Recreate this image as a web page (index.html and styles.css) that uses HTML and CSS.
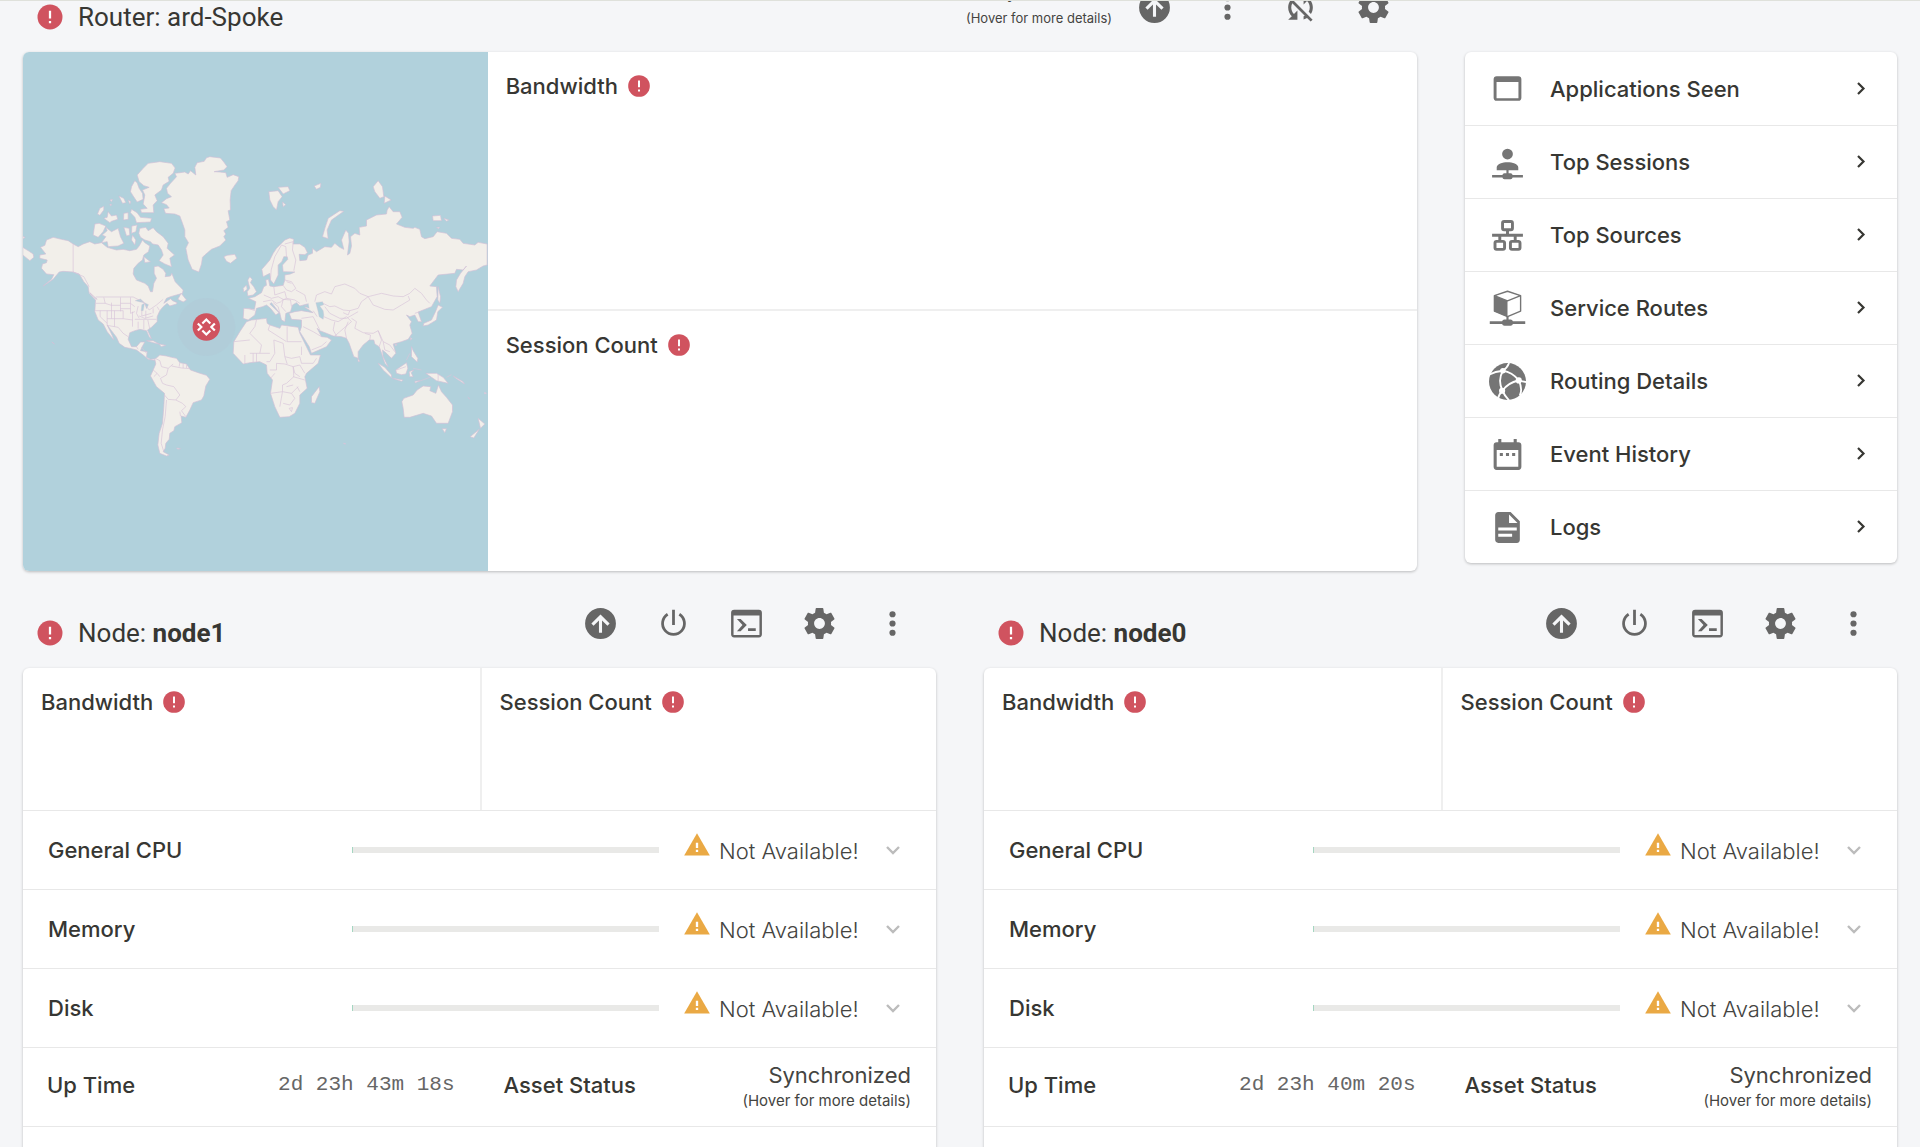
FILE: index.html
```html
<!DOCTYPE html>
<html lang="en">
<head>
<meta charset="utf-8">
<title>Router: ard-Spoke</title>
<link rel="stylesheet" href="styles.css">
</head>
<body>
<svg class="sprite" aria-hidden="true">
  <symbol id="i-error" viewBox="0 0 24 24"><circle cx="12" cy="12" r="10" fill="#d0535f"/><path fill="#fff" d="M11.1 7h1.8v6.2h-1.8zM11.1 15.2h1.8V17h-1.8z"/></symbol>
  <symbol id="i-warning" viewBox="0 0 24 24"><path fill="#eaa944" d="M1 21h22L12 2z"/><path fill="#fff" d="M11 10h2v4.5h-2zM11 16h2v2h-2z"/></symbol>
  <symbol id="i-up" viewBox="0 0 24 24"><path fill-rule="evenodd" d="M13,18V10L16.5,13.5L17.92,12.08L12,6.16L6.08,12.08L7.5,13.5L11,10V18H13M12,2A10,10 0 0,1 22,12A10,10 0 0,1 12,22A10,10 0 0,1 2,12A10,10 0 0,1 12,2Z"/></symbol>
  <symbol id="i-power" viewBox="0 0 24 24"><path fill="none" stroke="currentColor" stroke-width="1.8" d="M8.2 6A7.1 7.1 0 1 0 15.800 6M12 3v10"/></symbol>
  <symbol id="i-console" viewBox="0 0 24 24"><path fill-rule="evenodd" d="M4 3h16a2 2 0 0 1 2 2v14a2 2 0 0 1-2 2H4a2 2 0 0 1-2-2V5a2 2 0 0 1 2-2zM3.6 6.8v12.6h16.8V6.8zM5.8 9h2.4l4 4-4 4H5.8l3.6-4zM13 15h5v1.8h-5z"/></symbol>
  <symbol id="i-gear" viewBox="0 0 24 24"><path d="M19.43 12.98c.04-.32.07-.64.07-.98s-.03-.66-.07-.98l2.11-1.65c.19-.15.24-.42.12-.64l-2-3.46c-.12-.22-.39-.3-.61-.22l-2.49 1c-.52-.4-1.08-.73-1.69-.98l-.38-2.65C14.46 2.18 14.25 2 14 2h-4c-.25 0-.46.18-.49.42l-.38 2.65c-.61.25-1.17.59-1.69.98l-2.49-1c-.23-.09-.49 0-.61.22l-2 3.46c-.13.22-.07.49.12.64l2.11 1.65c-.04.32-.07.65-.07.98s.03.66.07.98l-2.11 1.65c-.19.15-.24.42-.12.64l2 3.46c.12.22.39.3.61.22l2.49-1c.52.4 1.08.73 1.69.98l.38 2.65c.03.24.24.42.49.42h4c.25 0 .46-.18.49-.42l.38-2.65c.61-.25 1.17-.59 1.69-.98l2.49 1c.23.09.49 0 .61-.22l2-3.46c.12-.22.07-.49-.12-.64l-2.11-1.65zM12 15.5c-1.93 0-3.5-1.57-3.5-3.5s1.57-3.5 3.5-3.5 3.5 1.57 3.5 3.5-1.57 3.5-3.5 3.5z"/></symbol>
  <symbol id="i-more" viewBox="0 0 24 24"><circle cx="12" cy="6" r="2"/><circle cx="12" cy="12" r="2"/><circle cx="12" cy="18" r="2"/></symbol>
  <symbol id="i-nosync" viewBox="0 0 24 24"><path d="M10 6.35V4.26c-.8.21-1.55.54-2.23.96l1.46 1.46c.25-.12.5-.24.77-.33zm-7.14-.94l2.36 2.36C4.45 8.99 4 10.44 4 12c0 2.21.91 4.2 2.36 5.64L4 20h6v-6l-2.24 2.24C6.68 15.15 6 13.66 6 12c0-1 .25-1.94.68-2.77l8.08 8.08c-.25.13-.5.25-.77.34v2.09c.8-.21 1.55-.54 2.23-.96l2.36 2.36 1.27-1.27L4.14 4.14 2.86 5.41zM20 4h-6v6l2.24-2.24C17.32 8.85 18 10.34 18 12c0 1-.25 1.94-.68 2.77l1.46 1.46C19.55 15.01 20 13.56 20 12c0-2.21-.91-4.2-2.36-5.64L20 4z"/></symbol>
  <symbol id="i-app" viewBox="0 0 24 24"><path fill-rule="evenodd" d="M5 4h14a2 2 0 0 1 2 2v12a2 2 0 0 1-2 2H5a2 2 0 0 1-2-2V6a2 2 0 0 1 2-2zM4.9 7.8v10.6h14.2V7.8z"/></symbol>
  <symbol id="i-user" viewBox="0 0 24 24"><circle cx="12" cy="6.500" r="3.500"/><path d="M5 17v-1.800c0-2.200 3.800-3.400 7-3.400s7 1.200 7 3.400V17h-6.300v2h1.300a1.300 1.300 0 0 1 1.300 1.100H22v1.700h-6.700A1.300 1.300 0 0 1 14 22.900h-4a1.300 1.300 0 0 1-1.300-1.100H2v-1.700h6.700A1.300 1.300 0 0 1 10 19h1.300v-2z"/></symbol>
  <symbol id="i-tree" viewBox="0 0 24 24"><path fill="none" stroke="currentColor" stroke-width="1.9" d="M9.800 2.900h4.400a1 1 0 0 1 1 1v3.400a1 1 0 0 1-1 1H9.800a1 1 0 0 1-1-1V3.900a1 1 0 0 1 1-1zM12 8.500v3.300M2 11.800h20M7 12v3.500M17 12v3.500M4.900 15.800h4.200a1 1 0 0 1 1 1V20a1 1 0 0 1-1 1H4.900a1 1 0 0 1-1-1v-3.200a1 1 0 0 1 1-1zM14.900 15.800h4.200a1 1 0 0 1 1 1V20a1 1 0 0 1-1 1h-4.200a1 1 0 0 1-1-1v-3.200a1 1 0 0 1 1-1z"/></symbol>
  <symbol id="i-cube" viewBox="0 0 24 24"><path fill="none" stroke="currentColor" stroke-width=".9" stroke-linejoin="round" d="M12 .8l8.500 2.900v10L12 17.200l-8.500-3.500v-10zM3.500 3.700L12 7l8.500-3.300"/><path d="M3.300 3.700L12 7v10.400l-8.700-3.600zM11.300 17h1.400v2.200h1.300a1.600 1.600 0 0 1 1.500 1.100h8v1.700h-8a1.600 1.600 0 0 1-1.500 1.200h-4A1.600 1.600 0 0 1 8.500 22h-8v-1.700h8a1.600 1.600 0 0 1 1.500-1.100h1.300z"/></symbol>
  <symbol id="i-globe" viewBox="0 0 24 24"><circle cx="12" cy="12" r="12"/><g fill="none" stroke="#fff" stroke-width="1.200"><path d="M0 7.600Q4 5.500 9 5Q12 3 13 0M9 5Q5.500 11 8.700 18Q10 21 13 24.200M9 5Q15 6 19.300 11.200Q22 12 24.500 12.400M19.300 11.200Q12 13 8.700 18Q6.500 20 5.500 24M19.300 11.200Q22 17 20 21"/></g><g fill="#fff"><circle cx="9" cy="5" r="1.800"/><circle cx="19.300" cy="11.300" r="2"/><circle cx="8.500" cy="18" r="2"/></g></symbol>
  <symbol id="i-calendar" viewBox="0 0 24 24"><path fill-rule="evenodd" d="M6 2h2v2h8V2h2v2h1a2 2 0 0 1 2 2v14a2 2 0 0 1-2 2H5a2 2 0 0 1-2-2V6a2 2 0 0 1 2-2h1zM5 9v11h14V9zM7 11h2v2H7zM11 11h2v2h-2zM15 11h2v2h-2z"/></symbol>
  <symbol id="i-doc" viewBox="0 0 24 24"><path fill-rule="evenodd" d="M13,9H18.500L13,3.500V9M6,2H14L20,8V20A2,2 0 0,1 18,22H6C4.890,22 4,21.100 4,20V4C4,2.890 4.890,2 6,2M15,18V16H6V18H15M18,14V12H6V14H18Z"/></symbol>
  <symbol id="i-right" viewBox="0 0 16 16"><path fill="none" stroke="currentColor" stroke-width="2.200" d="M5 2L10.500 7.500L5 13"/></symbol>
  <symbol id="i-down" viewBox="0 0 16 16"><path fill="none" stroke="currentColor" stroke-width="2.400" d="M2 5L8 11L14 5"/></symbol>
</svg>
<main class="page">
  <div class="overview">
    <section class="router">
      <header class="bar">
        <h1 class="title"><svg class="badge"><use href="#i-error"/></svg>Router: ard-Spoke</h1>
        <div class="actions">
          <p class="sync">Synchronized<small>(Hover for more details)</small></p>
          <button class="action" aria-label="Upgrade"><svg><use href="#i-up"/></svg></button>
          <button class="action" aria-label="More"><svg><use href="#i-more"/></svg></button>
          <button class="action" aria-label="Synchronization disabled"><svg><use href="#i-nosync"/></svg></button>
          <button class="action" aria-label="Settings"><svg><use href="#i-gear"/></svg></button>
        </div>
      </header>
      <div class="card router-card">
        <svg class="map" viewBox="0 0 465 519" preserveAspectRatio="xMidYMid slice" role="img" aria-label="World map">
          <g transform="translate(-3 88) scale(.33333)">
            <g class="land">
              <path d="M425,188L440,176 455,170 443,160 440,145 452,130 470,110 465,100 480,98 495,96 505,102 512,92 528,105 525,82 532,68 553,64 560,53 570,50 602,54 612,66 622,80 612,90 583,95 600,96 618,98 622,112 640,104 657,110 655,122 646,134 634,152 631,180 632,210 625,212 630,240 620,245 625,262 612,272 618,282 612,290 618,300 600,318 575,328 555,345 548,352 545,372 537,396 517,388 505,360 498,325 506,308 495,290 495,270 488,250 480,228 465,222 437,220 432,206 448,204 440,194Z"/>
              <path d="M352,105L370,85 385,70 420,65 455,70 466,84 460,100 445,112 448,124 430,135 425,150 405,165 412,182 400,195 402,218 365,218 362,208 382,205 370,192 375,165 368,150 388,142 372,137 358,125Z"/>
              <path d="M335,140L345,122 352,128 358,145 368,160 370,178 352,186 340,168 332,155ZM225,252L238,250 258,258 250,275 235,292 220,285ZM258,262L275,275 295,265 302,290 312,310 295,318 265,320 262,305 245,308 258,290 247,285 262,272ZM360,265L378,262 385,272 400,263 410,275 430,290 445,310 442,325 464,345 450,355 455,380 435,372 418,362 430,345 425,330 415,315 398,312 392,305 375,300 362,292 357,280ZM335,208L352,218 362,232 395,235 392,246 350,248 345,232 332,218ZM252,235L262,232 265,215 275,228 290,225 294,238 275,244 270,248ZM233,222L240,205 252,199 252,210 240,226ZM297,168L312,175 318,188 308,190ZM325,180L333,185 330,193ZM312,220L325,218 325,238 311,240ZM336,258L352,255 348,275 335,280ZM312,262L328,265 330,285 320,288ZM338,285L348,300 345,315 335,300ZM372,350L392,365 375,368ZM270,180L278,178 275,185ZM270,192L276,194 272,198Z"/>
              <path d="M62,322L75,316 80,300 100,292 125,298 145,302 160,312 175,320 190,312 210,305 225,312 245,308 262,322 290,330 310,328 330,332 350,328 358,318 368,300 375,308 390,318 386,335 372,345 368,360 355,370 342,385 340,402 350,420 375,430 385,438 392,455 398,455 402,430 410,415 403,400 403,380 415,378 430,388 438,400 436,410 452,408 456,400 466,425 490,450 488,460 470,465 452,470 440,475 432,490 452,476 458,482 472,488 470,492 450,498 442,490 430,500 420,512 412,530 412,545 395,562 383,570 390,585 395,597 388,590 380,572 360,568 345,572 330,578 325,598 335,620 350,620 362,606 375,606 366,622 362,632 382,635 380,652 392,658 408,656 404,661 385,658 370,645 350,630 335,626 315,622 298,610 290,592 275,572 262,555 278,588 282,600 262,575 250,552 235,540 225,515 227,480 208,460 205,440 192,425 178,402 160,396 130,394 118,396 100,418 70,438 95,418 102,404 80,402 65,385 68,372 80,368 82,360 60,355 60,345 78,342Z"/>
              <path d="M474,478L484,460 500,480 490,486ZM380,602L400,602 418,612 400,608ZM418,612L438,616 424,620ZM9,322L28,334 40,342 42,352 30,362 9,345ZM96,606L104,612 98,608ZM210,458L232,478 222,472ZM470,924L482,926 474,928ZM9,289L16,292 10,296Z"/>
              <path d="M405,658L420,645 440,648 455,652 470,655 480,668 500,672 512,690 535,698 560,706 570,718 558,738 552,768 545,780 520,788 510,810 498,832 484,828 486,848 465,860 462,872 450,880 448,898 438,910 436,925 430,935 448,945 440,948 420,940 414,915 418,880 428,850 432,800 434,760 410,740 392,708 400,690 408,672Z"/>
              <path d="M612,350L622,346 645,343 651,355 632,370 620,364ZM682,455L690,445 686,430 684,420 690,410 697,418 692,428 702,440 710,455 700,465 684,468ZM670,445L680,435 682,448 672,456Z"/>
            </g>
            <path class="sea" d="M346,482L362,477 374,488 362,486ZM364,512L366,494 374,490 370,512ZM374,488L386,494 380,506Z"/>
            <path class="borders" d="M160,312V396L192,410 208,440M228,471H340L370,486 388,510 410,495 430,478M252,472L256,490H228M226,512H275M275,488V536M241,512V530L262,550M262,512V556M284,512V560M302,472V514M332,472V520M256,490L275,496H302M302,490H332L345,500M302,506H332M275,512H310V536M262,536H310L338,540M332,520L345,515M338,515V560M355,498L350,520 358,535M366,512V528L395,520M378,512V535M345,538H410M372,540V568M384,540L390,568M355,545V566M358,528L375,535 400,528M400,505V520M412,500L418,510M262,556L295,562 310,580 325,590M350,620L355,628M366,622L380,640M408,656L420,662 425,680 445,685 440,705 422,715 428,730 440,735 462,740 480,765 468,780 445,778 434,765M445,685L460,672M480,668L478,680M490,672V684M500,674V684M455,678L485,684 510,686M400,690L412,700 402,710M412,700L420,710M468,780L488,790 498,800 485,812 498,830M440,780L436,830 428,870 424,910 432,935M480,815L482,828"/>
          </g>
          <g transform="translate(227 88) scale(.33333)">
            <g class="land">
              <path d="M-18,505L14,508 18,485 -4,475 15,470 35,458 42,440 50,436 48,420 56,418 60,438 72,440 100,436 105,420 105,405 122,402 135,396 100,395 98,375 114,358 112,350 102,350 96,365 85,375 85,405 72,432 62,420 60,400 40,410 36,388 50,372 60,360 70,340 80,325 105,300 120,294 132,298 130,312 150,312 165,322 173,338 165,344 148,343 150,362 170,360 175,345 188,340 188,325 200,335 225,320 245,322 255,310 270,322 282,328 275,300 288,270 296,280 298,305 293,345 300,340 305,318 302,290 315,280 330,285 328,262 350,258 350,240 380,225 410,222 412,210 418,200 430,215 450,215 457,232 440,252 465,262 490,265 495,262 510,268 515,290 525,296 550,290 562,275 590,280 605,295 630,298 640,310 675,315 685,307 712,312 712,375 700,378 680,390 655,395 645,410 640,430 625,455 618,440 620,420 632,400 650,378 640,390 620,388 615,400 565,405 540,438 560,440 562,470 545,500 520,510 505,516 515,545 505,545 495,525 480,530 470,525 485,545 480,555 487,580 475,598 455,605 438,610 430,612 438,640 425,655 410,640 398,630 400,650 415,680 405,670 392,630 388,620 375,612 372,600 358,600 340,615 325,635 325,655 312,650 298,610 290,595 275,590 250,588 235,582 210,572 202,565 215,590 232,592 245,600 230,620 185,640 178,620 150,575 155,560 155,540 125,538 118,520 135,515 155,512 190,518 178,510 165,502 172,492 150,498 140,488 128,495 122,515 108,520 105,545 95,540 90,520 65,488 60,492 88,518 78,525 62,505 50,495 38,500 20,505 15,525 -5,540 -20,535Z"/>
              <path d="M-10,545L5,540 50,535 52,550 60,555 90,565 95,555 145,562 150,580 160,600 182,645 212,645 205,670 170,700 165,710 172,745 150,765 150,790 135,820 118,830 90,832 75,800 62,760 68,720 52,700 50,675 30,665 0,668 -20,672 -50,640 -48,605 -30,575Z"/>
              <path d="M185,770L208,740 210,755 195,790 185,788ZM456,785L462,775 490,765 502,750 520,738 543,740 540,752 558,760 566,735 575,755 590,772 608,795 608,815 595,850 560,850 545,828 520,820 480,832 463,832 460,805ZM577,866L590,866 585,878ZM685,835L705,852 692,865ZM688,868L672,894 661,890ZM528,700L560,700 580,712 595,730 560,722 545,712ZM438,690L470,668 474,685 468,702 455,704 440,700ZM385,670L405,682 425,705 425,713 400,690ZM428,715L460,720 455,724ZM478,695L492,690 484,698 490,710 480,710ZM485,620L490,632 504,655 502,666 485,650ZM565,495L578,502 564,515 560,540 535,555 520,558 522,550 545,540 557,515ZM565,440L572,470 570,490 564,480ZM218,290L225,265 235,235 270,212 282,214 245,240 232,270 235,296ZM370,140L385,122 398,140 402,170 390,175 375,155ZM405,168L424,180 403,190ZM57,155L85,152 97,170 85,185 80,210 70,200 60,180ZM85,142L115,140 120,152 100,162ZM98,186L108,194 100,200ZM193,138L213,130 212,142 200,148ZM548,228L572,226 575,242 550,242ZM582,235L597,240 590,244ZM560,262L570,262 566,266ZM324,655L330,664 325,665ZM482,592L486,596 482,601ZM436,612L442,614 437,617ZM495,724L510,722 496,729ZM704,757L710,760 704,762ZM282,909L288,912H282ZM654,772L660,777ZM610,708L640,725 644,732 620,716Z"/>
            </g>
            <path class="sea" d="M198,488L218,485 222,494 210,498 220,512 222,525 220,538 208,530 205,515ZM175,490L165,500 178,505Z"/>
            <path class="borders" d="M62,420L64,390 75,350 95,315 108,320 110,350M105,312L130,305 128,330 138,360 132,392M105,420L125,425 138,445 125,455 110,450 100,436M125,430L110,425M105,455L75,465 72,440M105,455L110,475 135,480 150,490M138,450L165,465 170,485M42,465L65,475 85,470 100,478 95,500 108,515M40,485L65,480 80,490 95,485M70,488L85,500 90,520M100,478L122,480 125,500M110,475L95,482M-4,505L15,512M155,535L190,530 205,560 210,570M190,512L202,530M195,485L200,465 225,455 245,462 255,440 285,432 315,445 330,460 355,470 335,485 325,505 300,512 280,510 255,498 240,500 220,490M225,500L240,520 270,535 290,535 325,515M222,530L245,540 265,545 290,530 305,545 270,575 255,588M255,545L250,570 260,588M305,535L320,545 315,565 340,578 370,580 385,572M295,545L285,570 290,595M355,470L395,460 430,468 460,470 480,460 495,445 515,460 530,480 540,490M355,470L370,495 405,508 430,510 455,495 480,480 475,468M280,518L295,525 300,512M345,580L362,585 360,600M385,572L395,600 388,620M385,572L400,605 420,615 435,635M400,605L405,630 420,635M160,560L190,575 215,590M185,630L215,618 230,605M495,520L510,515M112,560V605H155M60,555L55,570 110,605M72,600L100,610 105,650 125,655 150,650M72,600L75,640 60,665 50,665M0,580L35,615 30,640 60,640M20,540L15,560 0,580M0,600L-48,605M0,640L30,640M10,640V668M20,640V666M-15,645V670M60,690H80V670L105,672 130,680 132,710 110,730 98,735 98,755 62,760M75,700L62,715M130,680L150,675 165,700M105,650L112,672M150,650L155,670 190,670 200,655M130,710L165,720M98,755L90,800M98,755L125,760 145,740M100,790L120,795 135,775M125,760L135,775M110,740L130,735M118,805L128,803 125,815ZM155,645V620M130,680L135,700 150,710M142,740L150,755M565,702V722M440,690L468,680M470,660L480,640M490,685L515,690M590,712L605,704M505,725L540,712"/>
          </g>
          <circle cx="183.500" cy="275" r="29" fill="#b3a6bd" opacity=".08"/>
          <circle cx="183.500" cy="275" r="13.700" fill="#d0535f"/>
          <path fill="none" stroke="#fff" stroke-width="2.200" d="M179.500 271.500l4-4 4 4M179.500 278.500l4 4 4-4M175 271.500l3.500 3.500-3.500 3.500M192 271.500l-3.500 3.500 3.500 3.500"/>
        </svg>
        <div class="charts">
          <section class="chart"><h2 class="metric">Bandwidth<svg class="alert"><use href="#i-error"/></svg></h2></section>
          <section class="chart"><h2 class="metric">Session Count<svg class="alert"><use href="#i-error"/></svg></h2></section>
        </div>
      </div>
    </section>
    <nav class="card menu">
      <a class="menu-item" href="#applications"><svg><use href="#i-app"/></svg><span>Applications Seen</span><svg class="go"><use href="#i-right"/></svg></a>
      <a class="menu-item" href="#sessions"><svg><use href="#i-user"/></svg><span>Top Sessions</span><svg class="go"><use href="#i-right"/></svg></a>
      <a class="menu-item" href="#sources"><svg><use href="#i-tree"/></svg><span>Top Sources</span><svg class="go"><use href="#i-right"/></svg></a>
      <a class="menu-item" href="#services"><svg><use href="#i-cube"/></svg><span>Service Routes</span><svg class="go"><use href="#i-right"/></svg></a>
      <a class="menu-item" href="#routing"><svg><use href="#i-globe"/></svg><span>Routing Details</span><svg class="go"><use href="#i-right"/></svg></a>
      <a class="menu-item" href="#events"><svg><use href="#i-calendar"/></svg><span>Event History</span><svg class="go"><use href="#i-right"/></svg></a>
      <a class="menu-item" href="#logs"><svg><use href="#i-doc"/></svg><span>Logs</span><svg class="go"><use href="#i-right"/></svg></a>
    </nav>
  </div>

  <div class="nodes">
    <section class="node">
      <header class="bar">
        <h2 class="title"><svg class="badge"><use href="#i-error"/></svg><span>Node: <b>node1</b></span></h2>
        <div class="actions">
          <button class="action" aria-label="Upgrade"><svg><use href="#i-up"/></svg></button>
          <button class="action" aria-label="Power"><svg><use href="#i-power"/></svg></button>
          <button class="action" aria-label="Console"><svg><use href="#i-console"/></svg></button>
          <button class="action" aria-label="Settings"><svg><use href="#i-gear"/></svg></button>
          <button class="action" aria-label="More"><svg><use href="#i-more"/></svg></button>
        </div>
      </header>
      <div class="card">
        <div class="pair">
          <section class="chart"><h3 class="metric">Bandwidth<svg class="alert"><use href="#i-error"/></svg></h3></section>
          <section class="chart"><h3 class="metric">Session Count<svg class="alert"><use href="#i-error"/></svg></h3></section>
        </div>
        <div class="row usage"><h3 class="label">General CPU</h3><div class="track"></div><p class="state"><svg><use href="#i-warning"/></svg>Not Available!</p><button class="expand" aria-label="Expand General CPU"><svg><use href="#i-down"/></svg></button></div>
        <div class="row usage"><h3 class="label">Memory</h3><div class="track"></div><p class="state"><svg><use href="#i-warning"/></svg>Not Available!</p><button class="expand" aria-label="Expand Memory"><svg><use href="#i-down"/></svg></button></div>
        <div class="row usage"><h3 class="label">Disk</h3><div class="track"></div><p class="state"><svg><use href="#i-warning"/></svg>Not Available!</p><button class="expand" aria-label="Expand Disk"><svg><use href="#i-down"/></svg></button></div>
        <div class="row facts">
          <div class="fact"><h3 class="label">Up Time</h3><time class="uptime">2d 23h 43m 18s</time></div>
          <div class="fact"><h3 class="label">Asset Status</h3><p class="asset">Synchronized<small>(Hover for more details)</small></p></div>
        </div>
        <div class="row"></div>
      </div>
    </section>
    <section class="node">
      <header class="bar">
        <h2 class="title"><svg class="badge"><use href="#i-error"/></svg><span>Node: <b>node0</b></span></h2>
        <div class="actions">
          <button class="action" aria-label="Upgrade"><svg><use href="#i-up"/></svg></button>
          <button class="action" aria-label="Power"><svg><use href="#i-power"/></svg></button>
          <button class="action" aria-label="Console"><svg><use href="#i-console"/></svg></button>
          <button class="action" aria-label="Settings"><svg><use href="#i-gear"/></svg></button>
          <button class="action" aria-label="More"><svg><use href="#i-more"/></svg></button>
        </div>
      </header>
      <div class="card">
        <div class="pair">
          <section class="chart"><h3 class="metric">Bandwidth<svg class="alert"><use href="#i-error"/></svg></h3></section>
          <section class="chart"><h3 class="metric">Session Count<svg class="alert"><use href="#i-error"/></svg></h3></section>
        </div>
        <div class="row usage"><h3 class="label">General CPU</h3><div class="track"></div><p class="state"><svg><use href="#i-warning"/></svg>Not Available!</p><button class="expand" aria-label="Expand General CPU"><svg><use href="#i-down"/></svg></button></div>
        <div class="row usage"><h3 class="label">Memory</h3><div class="track"></div><p class="state"><svg><use href="#i-warning"/></svg>Not Available!</p><button class="expand" aria-label="Expand Memory"><svg><use href="#i-down"/></svg></button></div>
        <div class="row usage"><h3 class="label">Disk</h3><div class="track"></div><p class="state"><svg><use href="#i-warning"/></svg>Not Available!</p><button class="expand" aria-label="Expand Disk"><svg><use href="#i-down"/></svg></button></div>
        <div class="row facts">
          <div class="fact"><h3 class="label">Up Time</h3><time class="uptime">2d 23h 40m 20s</time></div>
          <div class="fact"><h3 class="label">Asset Status</h3><p class="asset">Synchronized<small>(Hover for more details)</small></p></div>
        </div>
        <div class="row"></div>
      </div>
    </section>
  </div>
</main>
</body>
</html>
```

FILE: styles.css
```css
* { box-sizing: border-box; }

body {
  margin: 0;
  background: #f5f6f8;
  color: #373733;
  font: 500 22px/28px Inter, "Open Sans", sans-serif;
}

h1, h2, h3, p { margin: 0; font-size: inherit; font-weight: 500; }
button { padding: 0; border: 0; background: none; color: inherit; }
svg { display: block; flex: none; fill: currentColor; }

.sprite { position: absolute; width: 0; height: 0; }

.page {
  height: 100vh;
  overflow: hidden;
  padding: 0 23px;
  border-top: 1px solid #dfe1db;
}

.overview {
  display: grid;
  grid-template-columns: minmax(0, 1fr) 432px;
  column-gap: 48px;
  align-items: start;
}

.router { margin-top: -46px; }

.bar {
  display: flex;
  justify-content: space-between;
  align-items: center;
  height: 97px;
  padding: 16px 7px 8px 12px;
}

.title {
  display: flex;
  align-items: center;
  gap: 13px;
  padding-top: 18px;
  font: 400 26px/32px Roboto, sans-serif;
}
.title b { font-weight: 700; }
.badge { width: 30px; height: 30px; }

.actions { display: flex; align-items: center; color: #666; }
.action { display: grid; place-items: center; width: 73px; height: 73px; }
.action svg { width: 37px; height: 37px; }

.sync, .asset { color: #444441; font-weight: 400; text-align: right; }
.sync { padding: 0 6px 12px 0; font-size: 18px; line-height: 32px; }
.sync small { display: block; font-size: 13px; line-height: 20px; }
.asset { padding-top: 3px; line-height: 24px; }
.asset small { display: block; font-size: 15px; line-height: 28px; }

.card {
  overflow: hidden;
  border-radius: 6px;
  background: #fff;
  box-shadow: 0 1px 3px rgba(0, 0, 0, .24);
}

.router-card { display: grid; grid-template-columns: 1fr 2fr; height: 519px; }
.map { width: 100%; height: 519px; background: #b1d1dc; }
.land { fill: #f2efea; stroke: #d2bfd6; stroke-width: 2; stroke-linejoin: round; }
.sea { fill: #b1d1dc; stroke: #d2bfd6; stroke-width: 1; }
.borders { fill: none; stroke: #d8c4da; stroke-width: 2; }

.chart { padding: 20px 18px; }
.metric { display: flex; align-items: center; gap: 8px; }
.alert { width: 26px; height: 26px; }

.charts { display: grid; grid-template-rows: 257px 1fr; }
.charts .chart { padding-top: 20px; }
.charts .chart + .chart { border-top: 2px solid #efefef; }

.menu { display: grid; margin-top: 51px; }
.menu-item {
  display: grid;
  grid-template-columns: 37px 1fr 16px;
  column-gap: 24px;
  align-items: center;
  height: 73px;
  padding: 0 28px 0 24px;
  color: inherit;
  text-decoration: none;
}
.menu-item + .menu-item { border-top: 1px solid #e8e8e8; }
.menu-item svg { width: 37px; height: 37px; color: #757575; }
.menu-item .go { width: 16px; height: 16px; color: #373733; }

.nodes { display: grid; grid-template-columns: 1fr 1fr; column-gap: 48px; }

.pair { display: grid; grid-template-columns: 1fr 1fr; height: 142px; }
.pair .chart + .chart { border-left: 2px solid #efefef; }

.row { height: 79px; border-top: 1px solid #e8e8e8; }
.usage {
  display: grid;
  grid-template-columns: 304fr 307fr 24px 197px 25px;
  align-items: center;
  padding: 0 31px 0 25px;
}
.track { height: 6px; border-left: 1px solid #a4d6c1; background: #e9e9e7; }
.state {
  grid-column: 4;
  display: flex;
  align-items: baseline;
  gap: 8px;
  padding-bottom: 4px;
  color: #444441;
  font-weight: 300;
  white-space: nowrap;
}
.state svg { width: 28px; height: 28px; }
.expand { display: grid; place-items: center; width: 25px; height: 25px; color: #bcbcbc; }
.expand svg { width: 16px; height: 16px; }

.facts { display: grid; grid-template-columns: 1fr 1fr; }
.fact {
  display: flex;
  align-items: center;
  justify-content: space-between;
  padding: 0 25px 0 24px;
}
.fact .label, .uptime { padding-bottom: 4px; }
.uptime { color: #666; font: 400 21px/28px "Liberation Mono", monospace; }
```
